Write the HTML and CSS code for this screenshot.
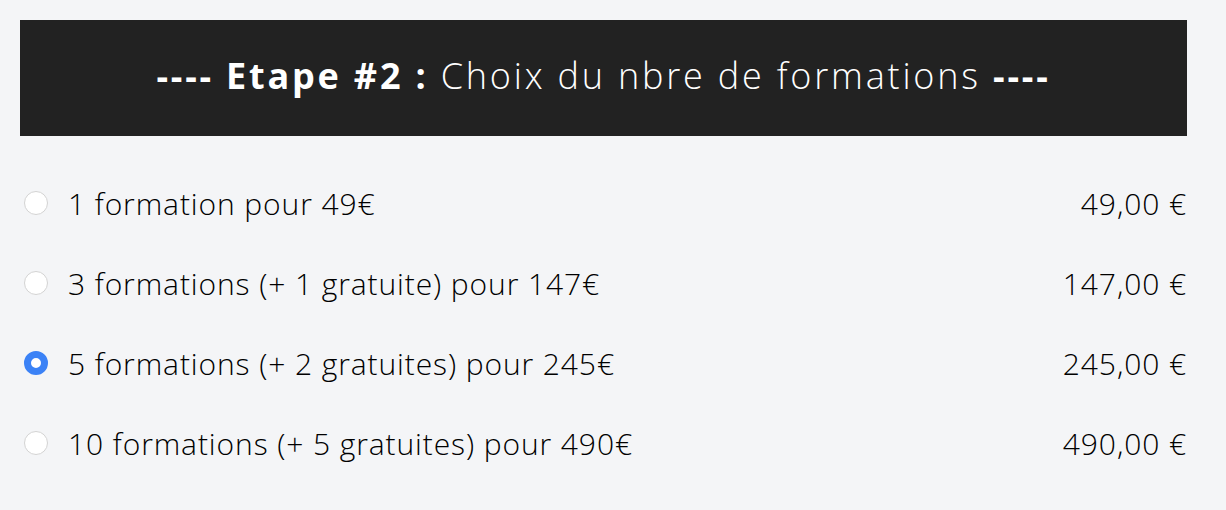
FILE: index.html
```html
<!DOCTYPE html>
<html lang="fr">
<head>
    <meta charset="UTF-8">
    <title>Etape 2</title>
    <link rel="stylesheet" href="styles.css">
</head>
<body>
<div id="step">
    <h2 class="step-title"><b>---- Etape #2 :</b> Choix du nbre de formations <b>----</b></h2>
    <ul class="options">
        <li class="option">
            <label><input type="radio" name="nbre"> 1 formation pour 49€</label>
            <span class="price">49,00 €</span>
        </li>
        <li class="option">
            <label><input type="radio" name="nbre"> 3 formations (+ 1 gratuite) pour 147€</label>
            <span class="price">147,00 €</span>
        </li>
        <li class="option">
            <label><input type="radio" name="nbre" checked> 5 formations (+ 2 gratuites) pour 245€</label>
            <span class="price">245,00 €</span>
        </li>
        <li class="option">
            <label><input type="radio" name="nbre"> 10 formations (+ 5 gratuites) pour 490€</label>
            <span class="price">490,00 €</span>
        </li>
    </ul>
</div>
</body>
</html>
```

FILE: styles.css
```css
* {
    padding: 0;
    margin: 0;
    list-style: none;
    box-sizing: border-box;
}

body {
    background-color: #f4f5f7;
    font-family: "Open Sans", "Liberation Sans", sans-serif;
    color: #111;
}

#step {
    margin: 20px 39px 0 20px;
}

.step-title {
    height: 116px;
    line-height: 112px;
    background-color: #222;
    color: #fff;
    font-size: 36px;
    font-weight: 300;
    letter-spacing: 2.8px;
    text-align: center;
}

.step-title b {
    font-weight: 700;
}

.options {
    padding-top: 27px;
}

.option {
    height: 80px;
    display: flex;
    align-items: center;
    justify-content: space-between;
    font-size: 30px;
    font-weight: 300;
    letter-spacing: 0.9px;
    color: #000;
}

.option label {
    display: flex;
    align-items: center;
    gap: 20px;
    padding-left: 4px;
}

.option input {
    appearance: none;
    width: 24px;
    height: 24px;
    border-radius: 50%;
    background-color: #fff;
    border: 1px solid #d3d3d3;
}

.option input:checked {
    background-color: #fff;
    border: 7px solid #3b82f6;
}
```
